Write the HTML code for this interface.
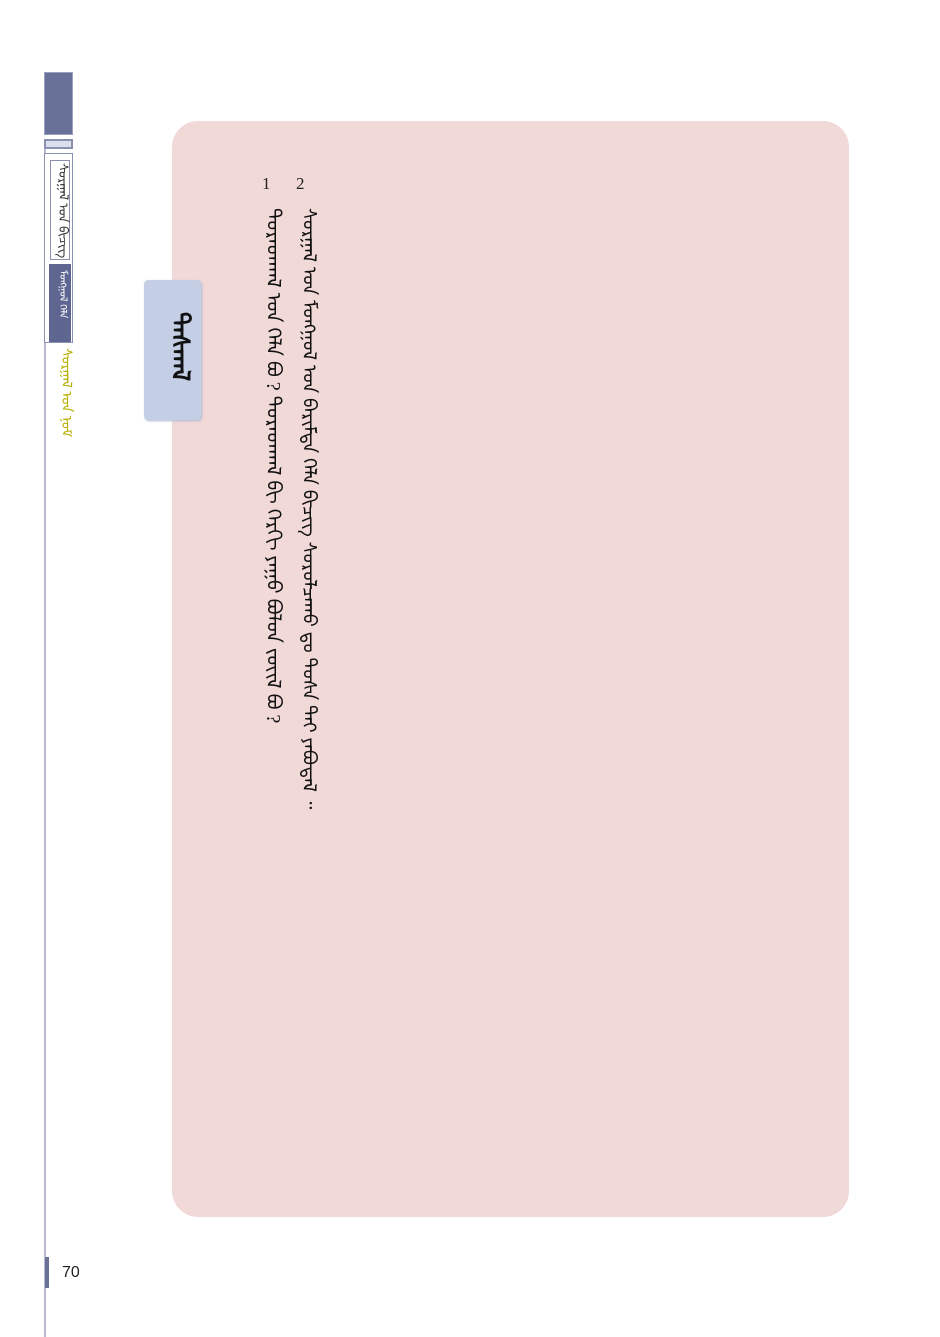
<!DOCTYPE html>
<html><head><meta charset="utf-8"><style>
html,body{margin:0;padding:0;background:#fff;}
body{width:940px;height:1337px;position:relative;overflow:hidden;font-family:"Liberation Sans",sans-serif;}
.abs{position:absolute;}
.mn{writing-mode:vertical-lr;font-family:"Liberation Serif","DejaVu Sans",serif;white-space:nowrap;}
</style></head><body>
<div class="abs" style="left:44px;top:140px;width:2px;height:1197px;background:#b8b9cf"></div>
<div class="abs" style="left:44px;top:72px;width:29px;height:63px;background:#6a7199;border:1px solid #9aa0bd;box-sizing:border-box"></div>
<div class="abs" style="left:44px;top:139px;width:29px;height:10px;border:2px solid #8a90b0;box-sizing:border-box;background:#dde0ec"></div>
<div class="abs" style="left:44px;top:153px;width:29px;height:190px;border:1px solid #8a90b0;box-sizing:border-box;background:#fff"></div>
<div class="abs" style="left:50px;top:160px;width:20px;height:100px;border:1px solid #8a90b0;box-sizing:border-box;"></div>
<div class="abs" style="left:49px;top:264px;width:22px;height:78px;background:#5d6590"></div>
<div class="abs mn" style="left:52px;top:163px;font-size:13px;color:#333">ᠰᠤᠷᠭᠠᠯ ᠤᠨ ᠪᠢᠴᠢᠭ</div>
<div class="abs mn" style="left:53px;top:270px;font-size:10px;letter-spacing:1px;color:#fff">ᠮᠣᠩᠭᠣᠯ ᠬᠡᠯᠡ</div>
<div class="abs mn" style="left:53px;top:348px;font-size:14px;color:#b8b000">ᠰᠤᠷᠭᠠᠯ ᠤᠨ ᠨᠣᠮ</div>
<div class="abs" style="left:45px;top:1257px;width:4px;height:31px;background:#6c7296"></div>
<div class="abs" style="left:62px;top:1264px;font-size:16px;color:#222">70</div>
<div class="abs" style="left:172px;top:121px;width:677px;height:1096px;background:#f1d9d8;border-radius:26px"></div>
<div class="abs" style="left:144px;top:280px;width:57px;height:140px;background:#c4cfe6;border-radius:4px;box-shadow:1px 1px 2px #b0b8d0"></div>
<div class="abs mn" style="left:158px;top:312px;font-size:25px;letter-spacing:2px;font-weight:bold;color:#111">ᠳᠠᠰᠬᠠᠯ</div>
<div class="abs" style="left:262px;top:174px;font-size:17px;font-family:'Liberation Serif',serif;color:#222">1</div>
<div class="abs" style="left:296px;top:174px;font-size:17px;font-family:'Liberation Serif',serif;color:#222">2</div>
<div class="abs mn" style="left:256px;top:208px;font-size:20px;color:#111;letter-spacing:2px">ᠳᠤᠷᠠᠳᠬᠠᠯ ᠤᠨ ᠬᠡᠯᠡ ᠪᠤ ? ᠳᠤᠷᠠᠳᠬᠠᠯ ᠪᠢ ᠬᠡᠷᠬᠢ ᠶᠠᠭᠤ ᠪᠣᠯᠣᠨ ᠵᠦᠢᠯ ᠪᠤ ?</div>
<div class="abs mn" style="left:291px;top:208px;font-size:19px;color:#111;letter-spacing:1.3px">ᠰᠤᠷᠭᠠᠯ ᠤᠨ ᠮᠣᠩᠭᠣᠯ ᠤᠨ ᠪᠠᠷᠢᠮᠲᠠ ᠬᠡᠯᠡ ᠪᠢᠴᠢᠭ ᠰᠤᠷᠤᠯᠴᠠᠬᠤ ᠳᠤ ᠲᠤᠰᠠ ᠲᠠᠢ ᠶᠠᠪᠤᠳᠠᠯ ᠃</div>
</body></html>
